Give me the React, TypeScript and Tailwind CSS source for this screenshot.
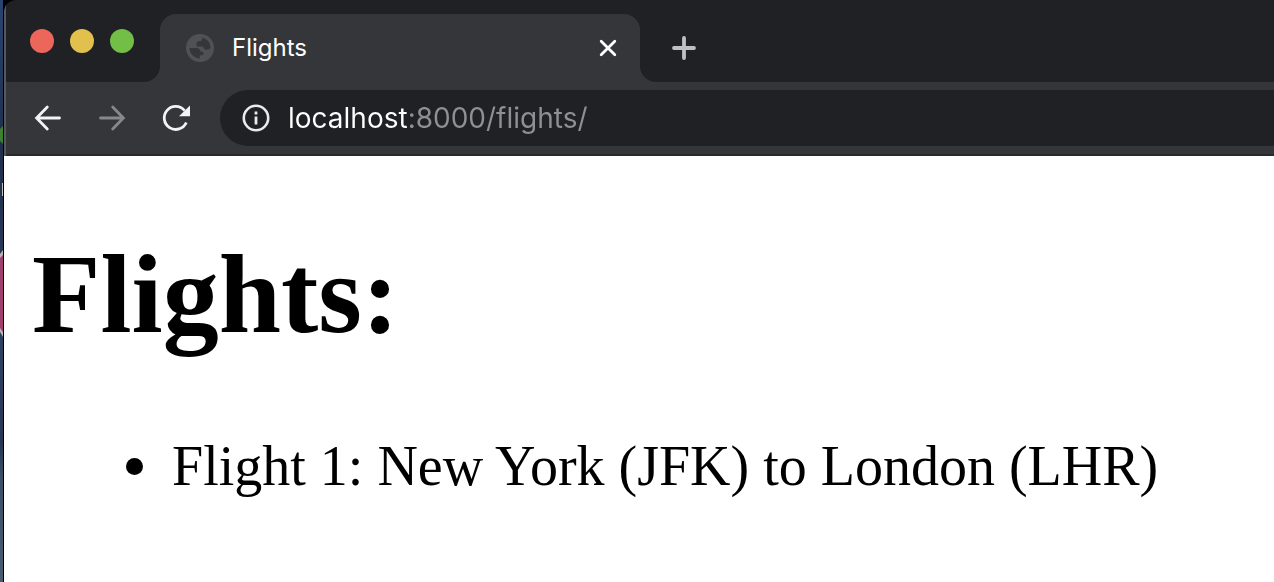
import React from "react";

function TabCorner({ side }: { side: "left" | "right" }) {
  return (
    <svg className="h-4 w-4 shrink-0 self-end" viewBox="0 0 16 16" fill="#35363a" aria-hidden="true">
      {side === "left" ? <path d="M16 0A16 16 0 0 1 0 16H16Z" /> : <path d="M0 0A16 16 0 0 0 16 16H0Z" />}
    </svg>
  );
}

function GlobeIcon() {
  return (
    <svg className="h-7 w-7 shrink-0" viewBox="0 0 28 28" aria-hidden="true">
      <circle cx="14" cy="14" r="14" fill="#505155" />
      <path
        d="M3.4 14H9.8C12.8 14 14.4 15.2 14.4 17.6C16.6 17.4 17.6 18.2 17.6 19.4C17.6 20.8 16.4 21.2 13.8 21.2V24.6A10.8 10.8 0 0 1 3.4 14ZM16.4 3.4A10.8 10.8 0 0 1 24.6 14C23.6 15.2 22.4 15.8 20.6 15.8C18.4 15.8 17.4 14.6 17.2 12.6H12.4C11 12.6 10.4 11.8 10.4 10.4C10.4 8.2 11.8 7 14 7C15.6 7 16.4 5.8 16.4 3.4Z"
        fill="#35363a"
      />
    </svg>
  );
}

function BackIcon() {
  return (
    <svg className="h-8 w-8" viewBox="0 0 32 32" fill="none" stroke="currentColor" strokeWidth="2.8" strokeLinecap="round" aria-hidden="true">
      <path d="M27.5 16H5M15.3 5L4.6 16L15.3 27" />
    </svg>
  );
}

function ForwardIcon() {
  return (
    <svg className="h-8 w-8" viewBox="0 0 32 32" fill="none" stroke="currentColor" strokeWidth="2.8" strokeLinecap="round" aria-hidden="true">
      <path d="M4.5 16H27M16.7 5L27.4 16L16.7 27" />
    </svg>
  );
}

function ReloadIcon() {
  return (
    <svg className="h-8 w-8" viewBox="0 0 32 32" aria-hidden="true">
      <path d="M26.3 20.5A11.5 11.5 0 1 1 24.6 8.6" fill="none" stroke="currentColor" strokeWidth="2.8" />
      <path d="M30 3.5V14.3H19Z" fill="currentColor" />
    </svg>
  );
}

function InfoIcon() {
  return (
    <svg className="h-7 w-7" viewBox="0 0 28 28" aria-hidden="true">
      <circle cx="14" cy="14" r="12.2" fill="none" stroke="currentColor" strokeWidth="2.6" />
      <path d="M12.6 7.6h2.8v2.8h-2.8zM12.6 12.6h2.8v7.8h-2.8z" fill="currentColor" />
    </svg>
  );
}

function TabStrip() {
  return (
    <div className="flex h-[82px] items-end bg-[#202124]">
      <div className="flex w-[138px] shrink-0 gap-4 self-start pt-[29px] pl-6">
        <button aria-label="Close window" className="h-6 w-6 rounded-full bg-[#ed665b]" />
        <button aria-label="Minimize window" className="h-6 w-6 rounded-full bg-[#e1c04d]" />
        <button aria-label="Zoom window" className="h-6 w-6 rounded-full bg-[#72be47]" />
      </div>
      <TabCorner side="left" />
      <div className="flex h-[68px] w-[480px] items-center rounded-t-2xl bg-[#35363a] pr-5 pl-[26px]">
        <GlobeIcon />
        <span className="ml-[18px] flex-1 text-[24px] text-white">Flights</span>
        <button aria-label="Close tab" className="text-white">
          <svg className="h-6 w-6" viewBox="0 0 24 24" stroke="currentColor" strokeWidth="2.8" strokeLinecap="round" aria-hidden="true">
            <path d="M5.2 5.2L18.8 18.8M18.8 5.2L5.2 18.8" />
          </svg>
        </button>
      </div>
      <TabCorner side="right" />
      <button aria-label="New tab" className="mb-5 ml-3 text-[#bdc1c6]">
        <svg className="h-7 w-8" viewBox="0 0 32 28" stroke="currentColor" strokeWidth="3.8" strokeLinecap="round" aria-hidden="true">
          <path d="M6 14H26M16 4V24" />
        </svg>
      </button>
    </div>
  );
}

function Toolbar() {
  return (
    <div className="flex items-center border-b-2 border-[#29292c] bg-[#35363a] py-2 pl-[26px]">
      <div className="flex shrink-0 gap-8 pr-7 text-[#f1f3f4]">
        <button aria-label="Back"><BackIcon /></button>
        <button aria-label="Forward" disabled className="text-[#87888b]"><ForwardIcon /></button>
        <button aria-label="Reload"><ReloadIcon /></button>
      </div>
      <div className="flex h-14 min-w-0 flex-1 items-center rounded-l-full bg-[#202124] pl-[22px]">
        <button aria-label="View site information" className="shrink-0 text-[#e8eaed]"><InfoIcon /></button>
        <input
          aria-label="Address"
          type="text"
          defaultValue="localhost:8000/flights/"
          className="ml-[18px] min-w-0 flex-1 bg-[linear-gradient(90deg,#ffffff_120px,#8f9092_120px)] bg-clip-text text-[28px] text-transparent caret-white outline-none"
        />
      </div>
    </div>
  );
}

function DesktopEdge() {
  return (
    <svg className="w-[3px] shrink-0 self-stretch" preserveAspectRatio="none" viewBox="0 0 3 582" aria-hidden="true">
      <defs>
        <linearGradient id="sky" x1="0" y1="0" x2="0" y2="1">
          <stop offset="0" stopColor="#294472" />
          <stop offset="0.25" stopColor="#1f2e4b" />
          <stop offset="0.6" stopColor="#30405f" />
          <stop offset="0.76" stopColor="#263653" />
          <stop offset="0.82" stopColor="#3d4f68" />
          <stop offset="1" stopColor="#4a5c72" />
        </linearGradient>
      </defs>
      <path d="M0 0H3V582H0Z" fill="url(#sky)" />
      <path d="M0 129L3 126V144L0 141Z" fill="#39832c" />
      <path d="M2 183H3V196H2Z" fill="#c3bfb8" />
      <path d="M0 254L3 250V337L0 332Z" fill="#b9b3b6" />
      <path d="M0 258L3 255V332L0 328Z" fill="#a04070" />
    </svg>
  );
}

export default function App() {
  return (
    <div className="flex min-h-screen bg-black font-[Inter,sans-serif]">
      <DesktopEdge />
      <div className="ml-px flex min-w-0 flex-1 flex-col overflow-hidden rounded-tl-xl">
        <header className="border-l-2 border-[#57585b]">
          <TabStrip />
          <Toolbar />
        </header>
        <main className="flex-1 bg-white px-7 font-['Liberation_Serif',serif] text-black">
          <h1 className="mt-[74px] mb-[75px] text-[112px] leading-[129px] font-bold">Flights:</h1>
          <ul className="pl-[94px] text-[56px] leading-[64px]">
            <li className="flex items-center gap-[29px]">
              <span className="h-[17px] w-[17px] shrink-0 rounded-full bg-black" aria-hidden="true" />
              <span>Flight 1: New York (JFK) to London (LHR)</span>
            </li>
          </ul>
        </main>
      </div>
    </div>
  );
}
